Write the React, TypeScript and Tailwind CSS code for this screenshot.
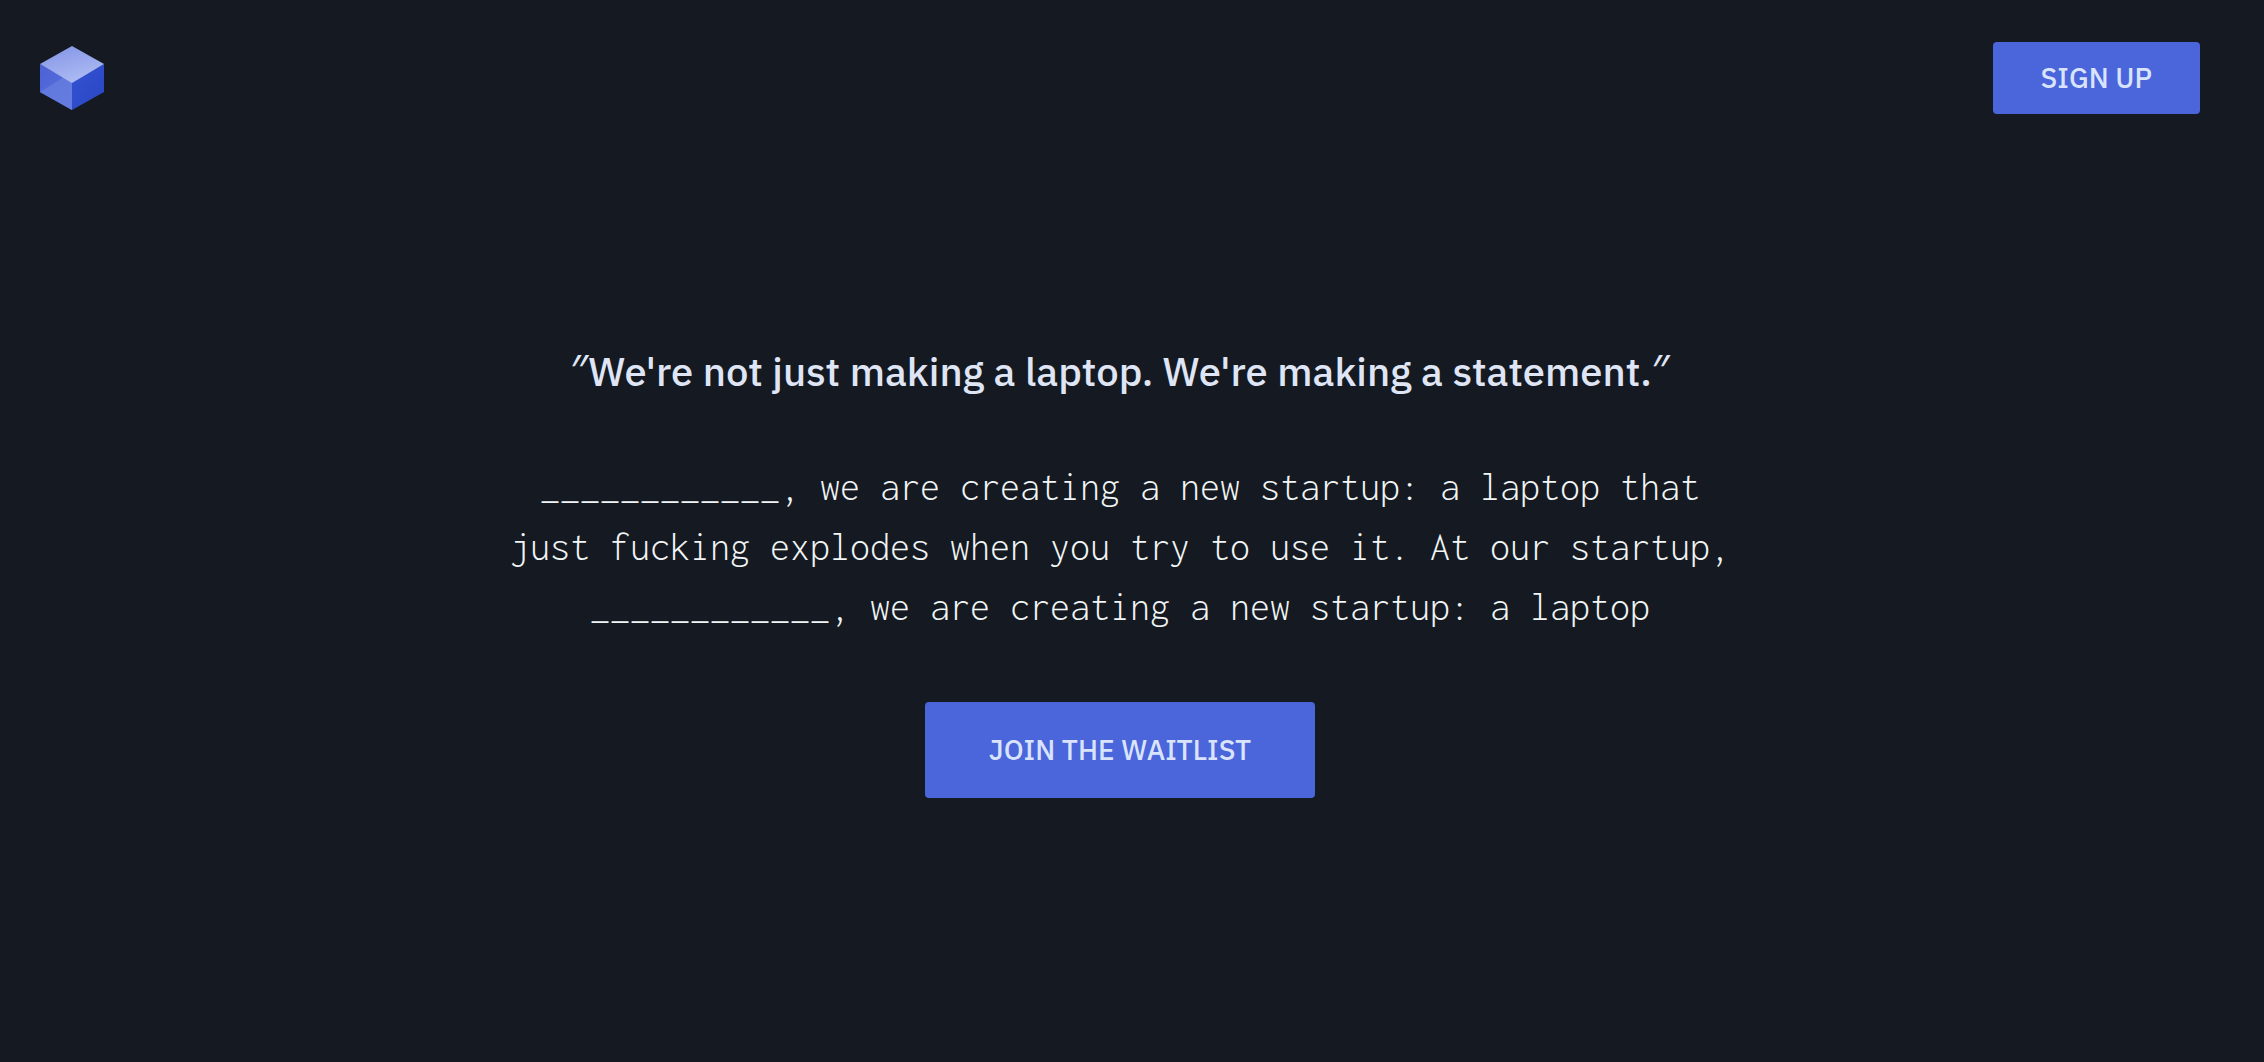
import clsx from 'clsx';

const QUOTE = "We're not just making a laptop. We're making a statement.";
const PITCH =
  '____________, we are creating a new startup: a laptop that just fucking explodes when you try to use it. At our startup, ____________, we are creating a new startup: a laptop';

function CubeLogo() {
  return (
    <svg viewBox="0 0 64 64" className="w-16 h-16" aria-hidden="true">
      <defs>
        <linearGradient id="cube-top" x1="0.2" y1="0" x2="0.7" y2="1">
          <stop offset="0" stopColor="#8496e6" />
          <stop offset="1" stopColor="#b0bdf4" />
        </linearGradient>
        <linearGradient id="cube-left" x1="0" y1="0" x2="1" y2="1">
          <stop offset="0" stopColor="#4a62d4" />
          <stop offset="1" stopColor="#5a72de" />
        </linearGradient>
        <linearGradient id="cube-shine" x1="0" y1="0" x2="1" y2="1">
          <stop offset="0" stopColor="#5f76dc" />
          <stop offset="1" stopColor="#667de0" />
        </linearGradient>
        <linearGradient id="cube-right" x1="0" y1="0" x2="1" y2="1">
          <stop offset="0" stopColor="#3352d2" />
          <stop offset="1" stopColor="#2a47c4" />
        </linearGradient>
      </defs>
      <path d="M0 18 32 36V64L0 46Z" fill="url(#cube-left)" />
      <path d="M0 46 24 31 32 36V64Z" fill="url(#cube-shine)" />
      <path d="M64 18 32 36V64L64 46Z" fill="url(#cube-right)" />
      <path d="M32 0 64 18 32 37 0 18Z" fill="url(#cube-top)" />
    </svg>
  );
}

function QuoteMark() {
  return (
    <span className="font-['Open_Sans',sans-serif] text-[44px] leading-none">
      ″
    </span>
  );
}

function ActionButton({ label, className }: { label: string; className: string }) {
  return (
    <button
      type="button"
      className={clsx(
        'rounded-sm bg-[#4b65db] hover:bg-[#5a73e4]',
        'text-[28px] leading-10 font-medium text-[#d9e4fc] uppercase',
        'cursor-pointer whitespace-nowrap',
        className
      )}
    >
      {label}
    </button>
  );
}

export default function App() {
  return (
    <div
      className={clsx(
        'min-h-screen flex flex-col pr-6',
        "bg-[#151a22] font-['IBM_Plex_Sans','Open_Sans',sans-serif]"
      )}
    >
      <header className="flex items-center justify-between px-10 pt-[42px]">
        <a href="/" aria-label="Home">
          <CubeLogo />
        </a>
        <ActionButton label="Sign up" className="px-12 py-4" />
      </header>

      <main className="flex flex-col items-center px-10 pt-[228px] pb-16 text-center">
        <h1 className="text-[40px] leading-[58px] font-medium text-[#dfe5f5]">
          <QuoteMark />
          {QUOTE}
          <QuoteMark />
        </h1>
        <p
          className={clsx(
            'mt-[57px] max-w-[1240px]',
            "font-['Inconsolata','Roboto_Mono',monospace] font-light",
            'text-[40px] leading-[60px] text-[#f1f5f5]'
          )}
        >
          {PITCH}
        </p>
        <ActionButton label="Join the waitlist" className="mt-[65px] px-16 py-7" />
      </main>
    </div>
  );
}
